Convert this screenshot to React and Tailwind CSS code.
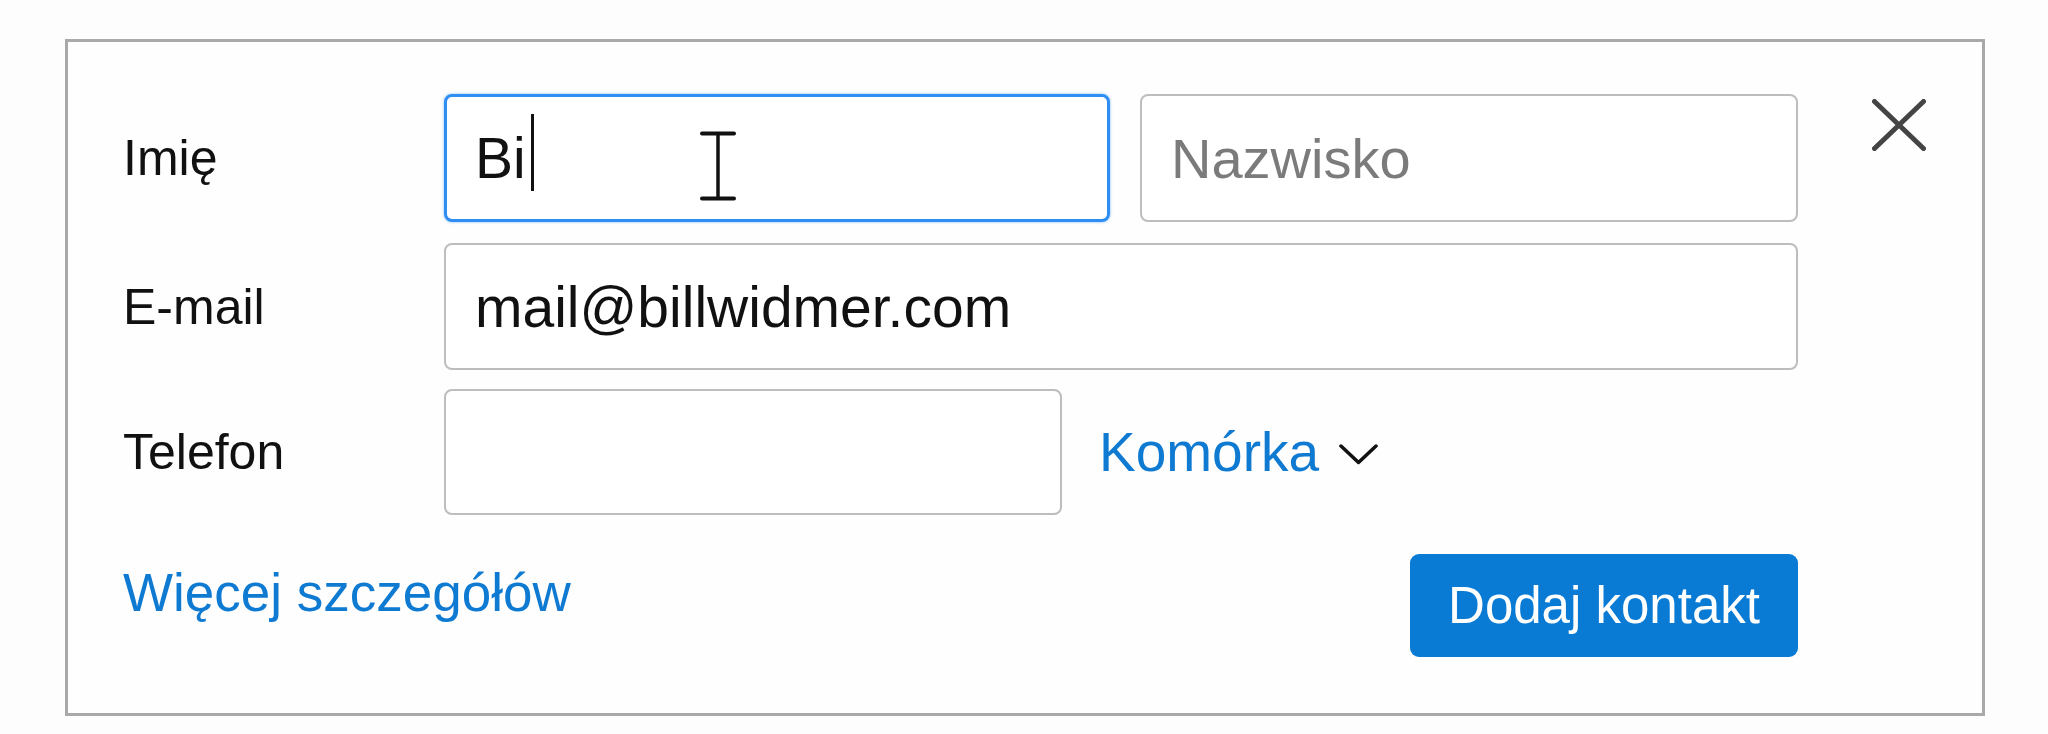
import React from 'react';

function CloseIcon() {
  return (
    <svg width="54" height="52" viewBox="0 0 54 52" fill="none" stroke="#444" strokeWidth="5" strokeLinecap="round">
      <path d="M2.5 2.5 L51.5 49.5 M51.5 2.5 L2.5 49.5" />
    </svg>
  );
}

function ChevronDown() {
  return (
    <svg width="39" height="21" viewBox="0 0 39 21" fill="none" stroke="#111" strokeWidth="3.5" strokeLinecap="round" strokeLinejoin="round">
      <polyline points="2,2 19.5,18.5 37,2" />
    </svg>
  );
}

// mouse pointer hovering over the first-name field
function TextCursor() {
  return (
    <svg className="absolute left-[252px] top-[33px]" width="38" height="72" viewBox="0 0 38 72" fill="none" stroke="#111" strokeLinecap="round">
      <path d="M3 3.5 H35 M3 68.5 H35" strokeWidth="4" />
      <path d="M19 4 V68" strokeWidth="3.5" />
    </svg>
  );
}

export default function App() {
  return (
    <div className="min-h-screen bg-[#fdfdfd] pt-[39px] pl-[65px] font-['Liberation_Sans',Arial,sans-serif]">
      <div className="flex items-start w-[1920px] h-[677px] border-[3px] border-[#a9a9a9] bg-[#fefefe] pt-[52px] pl-[55px]">
        <div className="w-[1675px]">
          {/* name */}
          <div className="flex items-center h-[128px]">
            <label className="w-[321px] text-[50px] leading-none text-[#111]">Imię</label>
            <div className="relative flex items-center w-[666px] h-[128px] rounded-[8px] border-[3px] border-[#2f8ef2] shadow-[0_0_3px_rgba(47,142,242,0.6)] bg-white pl-[28px]">
              <span className="text-[57px] leading-none text-[#111]">Bi</span>
              <span className="w-[3px] h-[77px] bg-[#111] ml-[5px] -mt-[11px]" />
              <TextCursor />
            </div>
            <input
              className="ml-[30px] w-[658px] h-[128px] rounded-[8px] border-2 border-[#bdbdbd] bg-white pl-[29px] text-[56px] leading-none text-[#111] placeholder:text-[#7b7b7b] outline-none"
              placeholder="Nazwisko"
            />
          </div>

          {/* email */}
          <div className="flex items-center h-[127px] mt-[21px]">
            <label className="w-[321px] text-[50px] leading-none text-[#111]">E-mail</label>
            <input
              className="w-[1354px] h-[127px] rounded-[8px] border-2 border-[#bdbdbd] bg-white pl-[29px] text-[57px] leading-none text-[#111] outline-none"
              defaultValue="mail@billwidmer.com"
              readOnly
            />
          </div>

          {/* phone */}
          <div className="flex items-center h-[126px] mt-[19px]">
            <label className="w-[321px] text-[50px] leading-none text-[#111]">Telefon</label>
            <input
              className="w-[618px] h-[126px] rounded-[8px] border-2 border-[#bdbdbd] bg-white pl-[29px] text-[57px] leading-none text-[#111] outline-none"
            />
            <button className="flex items-center ml-[37px] text-[55px] leading-none text-[#0f7ad2]">
              Komórka
              <span className="ml-[20px] mt-[4px]">
                <ChevronDown />
              </span>
            </button>
          </div>

          {/* footer */}
          <div className="flex items-start justify-between mt-[39px]">
            <a className="mt-[12px] text-[53px] leading-none text-[#0f7ad2]">Więcej szczegółów</a>
            <button className="w-[388px] h-[103px] rounded-[9px] bg-[#0a7bd5] text-[51px] leading-none text-white">
              Dodaj kontakt
            </button>
          </div>
        </div>

        <button className="ml-[74px] mt-[5px]">
          <CloseIcon />
        </button>
      </div>
    </div>
  );
}
